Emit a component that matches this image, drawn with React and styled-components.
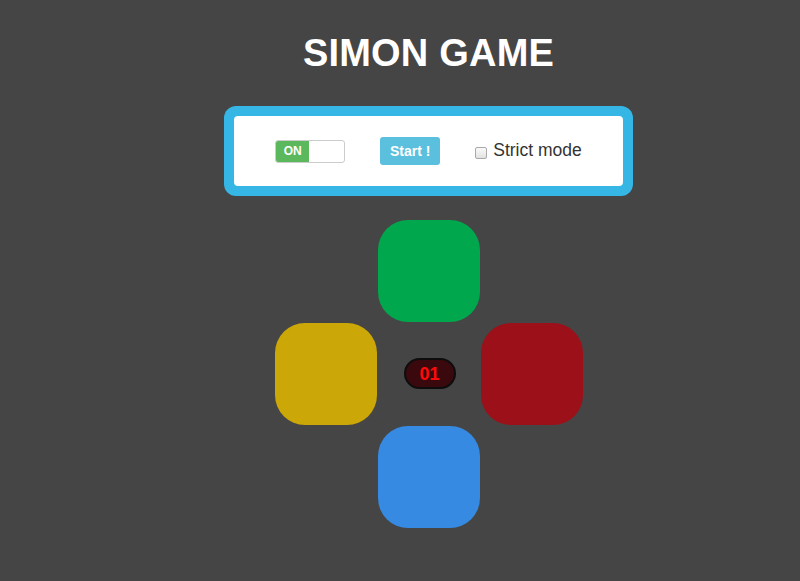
import React from "react";
import styled, { createGlobalStyle } from "styled-components";

const Global = createGlobalStyle`
  html, body { margin: 0; padding: 0; background: #454545; }
  body { font-family: "Liberation Sans", Arial, sans-serif; }
`;

const Page = styled.div`
  padding: 31px 0 40px 57px;
  display: flex;
  flex-direction: column;
  align-items: center;
`;

const Title = styled.h1`
  margin: 0;
  font-size: 38px;
  line-height: 44px;
  font-weight: 700;
  color: #ffffff;
  letter-spacing: 0.2px;
`;

const Frame = styled.div`
  margin-top: 31px;
  width: 389px;
  padding: 10px;
  background: #35b6e5;
  border-radius: 12px;
`;

const Controls = styled.div`
  height: 70px;
  background: #ffffff;
  border-radius: 4px;
  display: flex;
  align-items: center;
  justify-content: center;
  gap: 35px;
`;

const Toggle = styled.div`
  width: 68px;
  height: 21px;
  border: 1px solid #cccccc;
  border-radius: 3px;
  display: flex;
  overflow: hidden;
  background: #fff;
`;

const ToggleOn = styled.span`
  width: 33px;
  background: #5cb85c;
  color: #fff;
  font-size: 12px;
  font-weight: 700;
  line-height: 21px;
  text-align: center;
`;

const StartButton = styled.button`
  width: 60px;
  height: 28px;
  border: none;
  border-radius: 3px;
  background: #5bc0de;
  color: #fff;
  font-family: "Liberation Sans", Arial, sans-serif;
  font-size: 14px;
  font-weight: 700;
  padding: 0;
  cursor: pointer;
`;

const StrictLabel = styled.label`
  display: flex;
  align-items: center;
  font-size: 17.5px;
  color: #333333;
  margin-top: -2px;
`;

const Box = styled.span`
  width: 10px;
  height: 10px;
  border: 1px solid #a9a9a9;
  border-radius: 2px;
  background: linear-gradient(#fafafa, #e2e2e2);
  margin-right: 6px;
  margin-top: 5px;
`;

const Board = styled.div`
  margin-top: 24px;
  display: grid;
  grid-template-columns: repeat(3, 102px);
  grid-template-rows: repeat(3, 102px);
  gap: 1px;
`;

const Pad = styled.div`
  border-radius: 30px;
  background: ${(p) => p.$color};
  grid-column: ${(p) => p.$col};
  grid-row: ${(p) => p.$row};
`;

const Center = styled.div`
  grid-column: 2;
  grid-row: 2;
  display: flex;
  align-items: center;
  justify-content: center;
`;

const Counter = styled.div`
  width: 48px;
  height: 27px;
  border: 2px solid #0d0d0d;
  border-radius: 16px;
  background: #3a090d;
  color: #ff0a0a;
  font-size: 18px;
  font-weight: 700;
  line-height: 28px;
  text-align: center;
  margin-left: 2px;
  margin-top: -1px;
`;

export default function App() {
  return (
    <>
      <Global />
      <Page>
        <Title>SIMON GAME</Title>
        <Frame>
          <Controls>
            <Toggle>
              <ToggleOn>ON</ToggleOn>
            </Toggle>
            <StartButton>Start !</StartButton>
            <StrictLabel>
              <Box />
              Strict mode
            </StrictLabel>
          </Controls>
        </Frame>
        <Board>
          <Pad $color="#00a74c" $col={2} $row={1} />
          <Pad $color="#cca708" $col={1} $row={2} />
          <Center>
            <Counter>01</Counter>
          </Center>
          <Pad $color="#9c1019" $col={3} $row={2} />
          <Pad $color="#368ae1" $col={2} $row={3} />
        </Board>
      </Page>
    </>
  );
}
